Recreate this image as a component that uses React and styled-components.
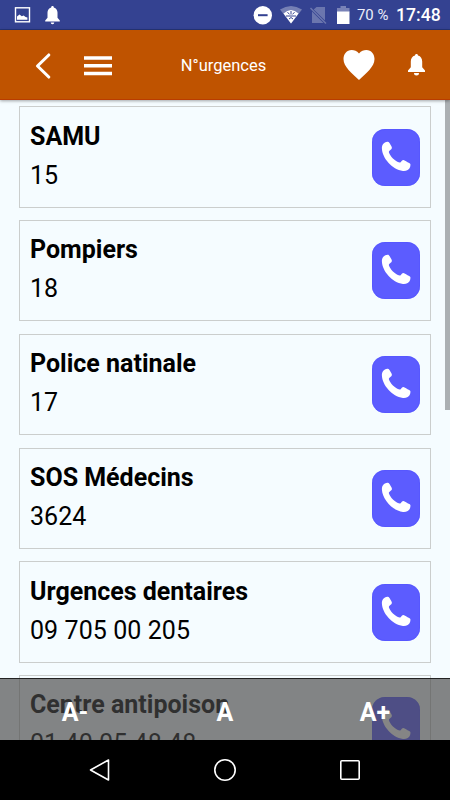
import React from 'react';
import styled, { createGlobalStyle } from 'styled-components';

const GlobalStyle = createGlobalStyle`
    * {
        box-sizing: border-box;
    }

    body {
        margin: 0;
        font-family: Roboto, "Liberation Sans", sans-serif;
        background-color: #f5fcff;
    }
`;

const Screen = styled.div`
    width: 450px;
    height: 800px;

    display: flex;
    flex-direction: column;
    position: relative;
    overflow: hidden;
`;

const StatusBar = styled.div`
    height: 30px;
    flex-shrink: 0;
    padding: 0 10px 0 14px;

    display: flex;
    align-items: center;
    justify-content: space-between;

    color: #fff;
    background-color: #344291;
    border-bottom: solid 1px #263577;
`;

const StatusGroup = styled.div`
    display: flex;
    align-items: center;

    svg {
        display: block;
    }
`;

const Battery = styled.span`
    width: 31px;
    margin-left: 6px;
    font-size: 14.9px;
    line-height: 28px;
    white-space: nowrap;
    color: #eceefa;
`;

const Clock = styled.span`
    width: 44px;
    margin-left: 8px;
    font-size: 17.6px;
    font-weight: 500;
    line-height: 28px;
`;

const Header = styled.header`
    height: 70px;
    flex-shrink: 0;
    position: relative;
    z-index: 1;

    display: grid;
    grid-template-columns: 150px 1fr 150px;
    align-items: center;

    color: #fff;
    background-color: #bf5300;
    border-bottom: solid 1px #b93c00;
    box-shadow: 0 1px 3px rgba(0, 0, 0, .35);

    svg {
        display: block;
    }
`;

const HeaderSide = styled.div`
    height: 70px;
    padding: ${props => props.$padding};

    display: flex;
    align-items: center;
    justify-content: space-between;
`;

const Title = styled.h1`
    margin: 0 3px 0 0;
    font-size: 16.5px;
    font-weight: 400;
    text-align: center;
`;

const Content = styled.main`
    flex: 1;
    min-height: 0;
    padding: 6.4px 0 0 19px;

    display: flex;
    align-items: flex-start;
    overflow: hidden;
`;

const List = styled.div`
    width: 412px;

    display: flex;
    flex-direction: column;
    gap: 12.5px;
`;

const Card = styled.div`
    height: 101.25px;
    padding: 0 10px;

    display: flex;
    align-items: center;
    justify-content: space-between;

    border: solid 1px #cbcecd;
`;

const CardText = styled.div`
    height: 100%;
    padding-top: 9.3px;

    font-size: 25px;
    line-height: 39px;
    color: #000;
`;

const Name = styled.div`
    font-weight: 700;
`;

const Phone = styled.div`
    letter-spacing: .07px;
`;

const CallButton = styled.button`
    width: 48px;
    height: 57px;
    padding: 0;

    color: #fff;
    background-color: #5c5cff;
    border: none;
    border-radius: 13px;
    box-shadow: inset 0 0 1px #2b2bff;

    svg {
        display: block;
    }
`;

const ScrollThumb = styled.div`
    width: 5px;
    height: 310px;
    margin: -6.4px 0 0 auto;
    background-color: #abb0b3;
`;

const FontSizeBar = styled.div`
    width: 100%;
    height: 62px;
    position: absolute;
    bottom: 60px;
    left: 0;
    z-index: 1;

    display: flex;
    align-items: center;

    background-color: rgba(72, 72, 72, .665);
    border-top: solid 1px #222;
`;

const SizeButton = styled.button`
    flex: 1;
    padding: 7px 0 0;

    font: 700 25px/30px Roboto, "Liberation Sans", sans-serif;
    color: #fff;
    background: none;
    border: none;
`;

const NavBar = styled.nav`
    height: 60px;
    flex-shrink: 0;

    display: flex;
    align-items: center;
    justify-content: center;
    gap: 97px;

    background-color: #000;
`;

const contacts = [
    { name: 'SAMU', number: '15' },
    { name: 'Pompiers', number: '18' },
    { name: 'Police natinale', number: '17' },
    { name: 'SOS Médecins', number: '3624' },
    { name: 'Urgences dentaires', number: '09 705 00 205' },
    { name: 'Centre antipoison', number: '01 40 05 48 48' },
];

function PhoneStatus(){
    return(
        <StatusBar>
            <StatusGroup>
                <svg width="48" height="29" viewBox="14 0 48 29">
                    <rect x="15.5" y="7.8" width="14" height="14" fill="none" stroke="#fff" strokeWidth="1.4" />
                    <path d="M17 19.8v-3.3l2.5-2 2.3 1.8 1.8-.8 2 1.5 1.8.5v2.3z" fill="#fff" />
                    <path d="M52.5 6c-.9 0-1.3.6-1.3 1.4-2.5.7-3.7 2.8-3.7 5.2v5.2l-2.3 2.7v1h14.6v-1l-2.3-2.7v-5.2c0-2.4-1.2-4.5-3.7-5.2 0-.8-.4-1.4-1.3-1.4zM50.7 22.4a1.8 1.8 0 0 0 3.6 0z" fill="#fff" />
                </svg>
            </StatusGroup>
            <StatusGroup>
                <svg width="98" height="29" viewBox="253 0 98 29">
                    <circle cx="262.8" cy="15.2" r="9.2" fill="#fff" />
                    <path d="M258 15.2h9.6" stroke="#344291" strokeWidth="2" />
                    <path d="M280 9.5Q291 2.5 302 9.5L291 23.5z" fill="#7680b4" />
                    <path d="M283.5 13.5Q291 6.5 298.5 13.5L291 23.5z" fill="#fff" />
                    <path d="M287.5 12.2l2 2.2M291 11v3.5M294.5 12.2l-2 2.2M286 16h10M289 19l2-1.5 2 1.5" fill="none" stroke="#344291" strokeWidth="1" />
                    <path d="M316.5 7H325v13.5L313.7 9.5zM312 11.5L323.5 23H312z" fill="#6b76ae" />
                    <path d="M310.5 8l15.5 15.5" stroke="#6b76ae" strokeWidth="1.5" />
                    <path d="M340.5 6h5.5v2h3.5v4H337V8h3.5z" fill="#7982b7" />
                    <path d="M337 11.5h12.5V24H337z" fill="#fff" />
                </svg>
                <Battery>70 %</Battery>
                <Clock>17:48</Clock>
            </StatusGroup>
        </StatusBar>
    )
}

function AppHeader(){
    return(
        <Header>
            <HeaderSide $padding="2px 38px 0 34px">
                <svg width="18" height="28" viewBox="0 0 18 28">
                    <path d="M14.8 3L3.5 14l11.3 11" fill="none" stroke="#fff" strokeWidth="3.1" strokeLinecap="round" strokeLinejoin="round" />
                </svg>
                <svg width="28" height="20" viewBox="0 0 28 20">
                    <path d="M0 2h28M0 9.8h28M0 17.4h28" stroke="#fff" strokeWidth="3.5" />
                </svg>
            </HeaderSide>
            <Title>N°urgences</Title>
            <HeaderSide $padding="0 24px 0 43px">
                <svg width="32" height="30" viewBox="0 0 32 30">
                    <path d="M16 3.5C18.2.9 20.7 0 23.3 0 28.3 0 31.5 4 31.5 9c0 8-8.5 14-15.5 21C9 23 .5 17 .5 9c0-5 3.2-9 8.2-9 2.6 0 5.1.9 7.3 3.5z" fill="#fff" />
                </svg>
                <svg width="19" height="22" viewBox="0 0 19 22">
                    <path d="M9.5 0c-.9 0-1.5.6-1.5 1.5C5.2 2.3 3.8 4.6 3.8 7.5v5.8L1 16.5V18h17v-1.5l-2.8-3.2V7.5c0-2.9-1.4-5.2-4.2-6C11 .6 10.4 0 9.5 0zM7 19a2.5 2.5 0 0 0 5 0z" fill="#fff" />
                </svg>
            </HeaderSide>
        </Header>
    )
}

function CallIcon(){
    return(
        <svg width="48" height="57" viewBox="2 3 48 57">
            <path d="M17.5 15.8C19 15.6 19.5 17 20.5 18.8C22 21.3 22.4 22 21.3 23.2C20 24.6 18.6 24.8 18.9 26.2C20 30 25 35.5 29.7 36.5C31.3 36.8 31.5 33.7 33.3 34C35 34.3 37 36.3 39.2 37C41 37.8 40.5 39.2 40.1 41C39.3 44 36 45.3 33 45C22 43.5 12.3 32 11.9 22.5C11.8 19 13.5 16.3 17.5 15.8z" fill="currentColor" />
        </svg>
    )
}

function App(){
    return(
        <Screen>
            <GlobalStyle />
            <PhoneStatus />
            <AppHeader />
            <Content>
                <List>
                    {contacts.map(contact => (
                        <Card key={contact.name}>
                            <CardText>
                                <Name>{contact.name}</Name>
                                <Phone>{contact.number}</Phone>
                            </CardText>
                            <CallButton>
                                <CallIcon />
                            </CallButton>
                        </Card>
                    ))}
                </List>
                <ScrollThumb />
            </Content>
            <FontSizeBar>
                <SizeButton>A-</SizeButton>
                <SizeButton>A</SizeButton>
                <SizeButton>A+</SizeButton>
            </FontSizeBar>
            <NavBar>
                <svg width="28" height="28" viewBox="0 0 28 28">
                    <path d="M22.5 4v20L4.5 14z" fill="none" stroke="#fff" strokeWidth="1.6" strokeLinejoin="round" />
                </svg>
                <svg width="28" height="28" viewBox="0 0 28 28">
                    <circle cx="14" cy="14" r="10.2" fill="none" stroke="#fff" strokeWidth="1.6" />
                </svg>
                <svg width="28" height="28" viewBox="0 0 28 28">
                    <rect x="4.8" y="4.8" width="18.4" height="18.4" rx="1" fill="none" stroke="#fff" strokeWidth="1.6" />
                </svg>
            </NavBar>
        </Screen>
    )
}

export default App;
